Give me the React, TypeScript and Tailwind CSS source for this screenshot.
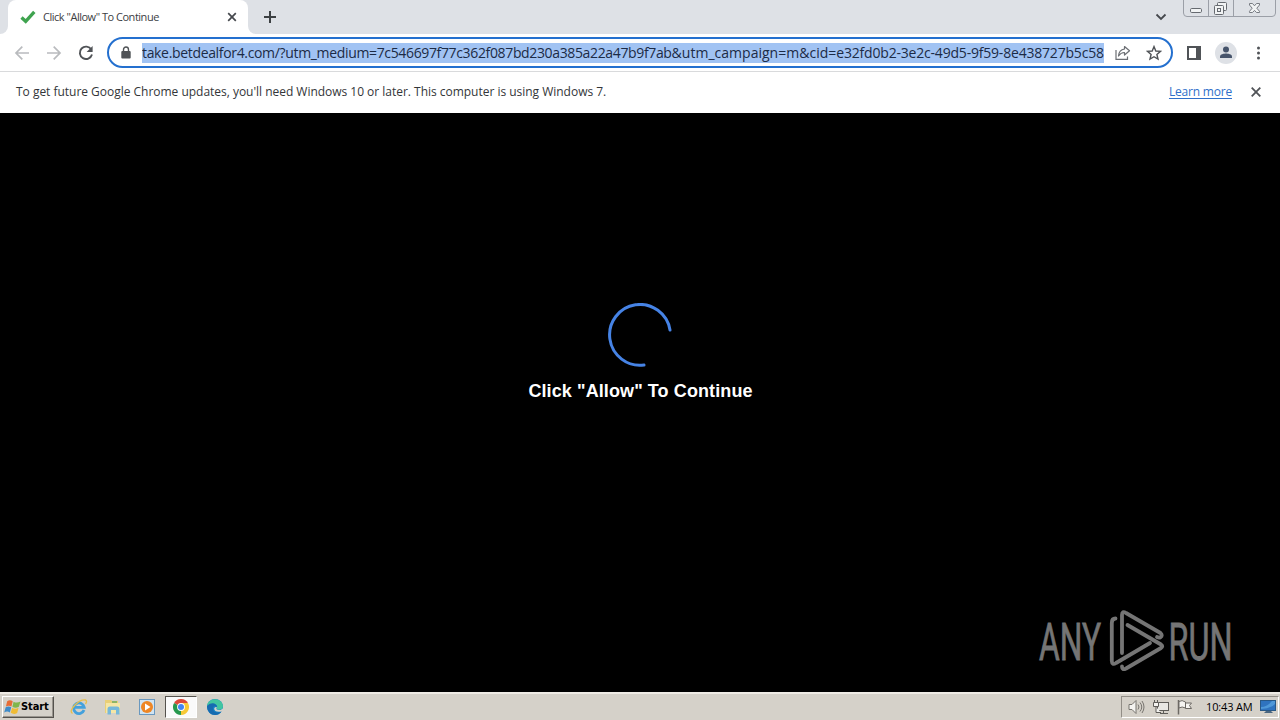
import type { ReactNode } from "react";

const uiFont = "font-['Open_Sans','Noto_Sans',sans-serif]";

function TabStrip() {
  return (
    <div className="flex h-[34px] items-start bg-[#dee1e6]">
      <div className="h-[34px] w-2 shrink-0 bg-white">
        <div className="h-full w-full rounded-br-lg bg-[#dee1e6]" />
      </div>
      <div className="flex h-[34px] w-[240px] shrink-0 items-center rounded-t-lg bg-white pl-3">
        <svg width="16" height="16" viewBox="0 0 16 16" fill="none">
          <path d="M1.5 8.5 5.7 12.3 14.3 2.8" stroke="#3fa34f" strokeWidth="3.3" />
        </svg>
        <span className="ml-[7px] w-[176px] whitespace-nowrap text-[11px] tracking-[-0.48px] text-[#3c4043]">
          Click "Allow" To Continue
        </span>
        <svg className="ml-[8px]" width="10" height="10" viewBox="0 0 10 10">
          <path d="M1.2 1.2 8.8 8.8M8.8 1.2 1.2 8.8" stroke="#45484d" strokeWidth="1.7" />
        </svg>
      </div>
      <div className="h-[34px] w-2 shrink-0 bg-white">
        <div className="h-full w-full rounded-bl-lg bg-[#dee1e6]" />
      </div>
      <svg className="ml-[8px] mt-[11px]" width="12" height="12" viewBox="0 0 12 12">
        <path d="M6 0V12M0 6H12" stroke="#3c4043" strokeWidth="2" />
      </svg>
      <svg className="ml-auto mt-[13px]" width="12" height="8" viewBox="0 0 12 8" fill="none">
        <path d="M1.5 1.5 6 6 10.5 1.5" stroke="#45484d" strokeWidth="1.8" />
      </svg>
      <WindowButtons />
    </div>
  );
}

function WindowButtons() {
  return (
    <svg className="ml-4 mr-1" width="93" height="18" viewBox="0 0 93 18" fill="none">
      <path
        d="M.5 0V13Q.5 16.5 4 16.5H89Q92.5 16.5 92.5 13V0M25.5 0V16.5M50.5 0V16.5"
        stroke="#9b9fa7"
      />
      <rect x="7.5" y="8.5" width="11" height="4" rx="1.2" fill="#f1f3f4" stroke="#666a70" />
      <rect x="34.5" y="2.5" width="9" height="8" rx="1" fill="#f1f3f4" stroke="#666a70" />
      <rect x="31.5" y="5.5" width="9" height="9" rx="1" fill="#f1f3f4" stroke="#666a70" />
      <rect x="34.5" y="8.5" width="3" height="3" stroke="#666a70" />
      <path
        d="M66.5 3.5H69.5L71.5 5.8 73.5 3.5H76.5V5L73.8 8.2 76.5 11.3V12.5H73.5L71.5 10.4 69.5 12.5H66.5V11.3L69.2 8.2 66.5 5Z"
        fill="#f1f3f4"
        stroke="#777b82"
      />
    </svg>
  );
}

function Toolbar() {
  return (
    <div className="flex h-[38px] items-center border-b border-[#d9dadc] bg-white">
      <svg className="ml-[14px]" width="16" height="16" viewBox="0 0 16 16" fill="none">
        <path d="M15 8H2M8.3 1.7 2 8 8.3 14.3" stroke="#b9bbbe" strokeWidth="1.7" />
      </svg>
      <svg className="ml-[16px]" width="16" height="16" viewBox="0 0 16 16" fill="none">
        <path d="M1 8H14M7.7 1.7 14 8 7.7 14.3" stroke="#b9bbbe" strokeWidth="1.7" />
      </svg>
      <svg className="ml-[16px]" width="16" height="16" viewBox="0 0 16 16" fill="none">
        <path d="M13.3 4.5A6.2 6.2 0 1 0 14 9.5" stroke="#505357" strokeWidth="1.9" />
        <path d="M14.6 1V7H8.6Z" fill="#505357" />
      </svg>
      <div className="ml-[13px] flex h-[31px] w-[1066px] items-center rounded-full border-2 border-[#2470cf] bg-white">
        <svg className="ml-[12px] shrink-0" width="10" height="14" viewBox="0 0 10 14" fill="none">
          <path d="M2.5 6V3.7A2.5 2.7 0 0 1 7.5 3.7V6" stroke="#505357" strokeWidth="1.4" />
          <rect x="0.3" y="5" width="9.4" height="7.5" rx="1" fill="#505357" />
        </svg>
        <div className="ml-[11px] h-[20px] w-[962px] shrink-0 overflow-hidden whitespace-nowrap bg-[#a1c3f3] text-[14px] leading-[20px] text-[#1c2b46]">
          <span className="tracking-[-0.335px]">take.betdealfor4.com/?utm_medium=</span>
          <span className="tracking-[-0.355px]">7c546697f77c362f087bd230a385a22a47b9f7ab</span>
          <span className="tracking-[0.02px]">&amp;utm_campaign=m&amp;cid=</span>
          <span className="tracking-[-0.2px]">e32fd0b2-3e2c-49d5-9f59-8e438727b5c58</span>
        </div>
        <svg className="ml-[11px] shrink-0" width="16" height="16" viewBox="0 0 16 16" fill="none">
          <path d="M1 5V14.3H12.5V11.5" stroke="#6b6e73" strokeWidth="1.2" />
          <path
            d="M9.5 1.5 14.5 5.8 9.5 10V7.5Q6 7.4 3.5 11Q4 4.7 9.5 4Z"
            stroke="#6b6e73"
            strokeWidth="1.2"
            strokeLinejoin="round"
          />
        </svg>
        <svg className="ml-[15px] shrink-0" width="16" height="16" viewBox="0 0 16 16" fill="none">
          <path
            d="M8 1.6 9.8 6 14.5 6.4 10.9 9.5 12 14.1 8 11.7 4 14.1 5.1 9.5 1.5 6.4 6.2 6Z"
            stroke="#505357"
            strokeWidth="1.4"
          />
        </svg>
      </div>
      <svg className="ml-[14px]" width="14" height="14" viewBox="0 0 14 14">
        <rect x="1" y="1" width="12" height="12" fill="none" stroke="#505357" strokeWidth="2" />
        <path d="M9 1H13V13H9Z" fill="#505357" />
      </svg>
      <svg className="ml-[14px]" width="22" height="22" viewBox="0 0 22 22">
        <circle cx="11" cy="11" r="11" fill="#dee1e6" />
        <circle cx="11" cy="7.5" r="3" fill="#46546b" />
        <path d="M5 16V14.5C5 12.3 9 11.6 11 11.6S17 12.3 17 14.5V16Z" fill="#46546b" />
      </svg>
      <svg className="ml-[19px]" width="4" height="14" viewBox="0 0 4 14" fill="#505357">
        <circle cx="2.5" cy="2" r="1.5" />
        <circle cx="2.5" cy="7" r="1.5" />
        <circle cx="2.5" cy="12" r="1.5" />
      </svg>
    </div>
  );
}

function InfoBar() {
  return (
    <div className="flex h-[41px] items-center bg-white pl-4 pr-[19px] text-[12px] text-[#333639]">
      <span className="whitespace-nowrap pb-[2px] tracking-[-0.02px]">
        To get future Google Chrome updates, you'll need Windows 10 or later. This computer is using Windows 7.
      </span>
      <a className="ml-auto whitespace-nowrap pb-[2px] tracking-[-0.2px] text-[#2f6fca] underline underline-offset-2">
        Learn more
      </a>
      <svg className="ml-[19px] mb-px" width="10" height="10" viewBox="0 0 10 10">
        <path d="M.7.7 9.3 9.3M9.3.7.7 9.3" stroke="#505357" strokeWidth="1.8" />
      </svg>
    </div>
  );
}

function Watermark() {
  return (
    <svg
      className="absolute right-[40px] bottom-[16px] overflow-visible"
      width="204"
      height="70"
      viewBox="0 0 204 70"
      fill="none"
    >
      <g
        fill="#757575"
        stroke="#757575"
        strokeWidth="0.8"
        fontFamily="Roboto, sans-serif"
        fontSize="52"
      >
        <text x="3" y="53.5" textLength="62" lengthAdjust="spacingAndGlyphs">ANY</text>
        <text x="132.5" y="53.5" textLength="64" lengthAdjust="spacingAndGlyphs">RUN</text>
      </g>
      <g stroke="#757575" strokeWidth="3.8" strokeLinecap="round" strokeLinejoin="round">
        <path d="M86 47V9Q86 4.5 90 7L124.5 27Q127 29.5 124.5 31.2Q123 32 121 31" />
        <path d="M79.5 12.5Q75.8 12.5 75.8 17V55Q76 59.5 80 57L114 37" />
        <path d="M91.5 19 125 38.5Q127.5 40.2 125 42L90 62.5Q86 64.5 86 60.5" />
      </g>
    </svg>
  );
}

function PageContent() {
  return (
    <main className="relative flex h-[579px] flex-col items-center bg-black pt-[190px]">
      <svg width="64" height="64" viewBox="0 0 64 64" fill="none">
        <path d="M62 27A30.4 30.4 0 1 0 36 62" stroke="#4683e5" strokeWidth="3" strokeLinecap="round" />
      </svg>
      <h1 className="mt-[12px] whitespace-nowrap pl-px font-['Liberation_Sans',sans-serif] text-[18px] font-bold leading-[24px] tracking-[0.1px] text-white">
        Click "Allow" To Continue
      </h1>
      <Watermark />
    </main>
  );
}

function TaskIcon({ children }: { children: ReactNode }) {
  return (
    <svg className="shrink-0" width="18" height="18" viewBox="0 0 18 18" fill="none">
      {children}
    </svg>
  );
}

function Taskbar() {
  return (
    <footer className="flex h-[28px] items-center border-t-2 border-[#eeebe5] bg-[#d5d1c9]">
      <button className="ml-[2px] flex h-[22px] w-[52px] shrink-0 items-center border border-b-[#55524d] border-l-white border-r-[#55524d] border-t-white pl-px shadow-[inset_-1px_-1px_0_#99958e]">
        <svg className="shrink-0" width="17" height="17" viewBox="0 0 16 16">
          <path d="M3 2Q5.5 .3 8.2 2L7 7Q4.5 5.7 1.8 7Z" fill="#e76d36" />
          <path d="M9 2.5Q12 4.3 15.5 2.3L14 7.2Q11 9 7.9 7.3Z" fill="#80b64b" />
          <path d="M1.6 7.8Q4.2 6.5 6.8 7.8L5.5 12.7Q3 11 .2 12.7Z" fill="#3e8bc9" />
          <path d="M7.7 8.2Q10.5 10 13.7 8.2L12.4 13.2Q9.3 15 6.3 13Z" fill="#f0bc35" />
        </svg>
        <span className="pt-px font-['DejaVu_Sans_Condensed','DejaVu_Sans',sans-serif] text-[11px] font-bold tracking-[-0.1px] text-black">
          Start
        </span>
      </button>
      <div className="ml-[16px] flex items-center">
        <TaskIcon>
          <path d="M14 12A5.3 5.3 0 1 1 14.2 9.3H5" stroke="#44a1dc" strokeWidth="2.8" />
          <path d="M2.5 15.5Q-1 13 5 7T15.5 2Q17.5 3 15.5 6" stroke="#e7bf4c" strokeWidth="1.4" />
        </TaskIcon>
        <div className="w-[16px]" />
        <TaskIcon>
          <path d="M1 2H7L8 3H14V15H1Z" fill="#e9cf77" />
          <path d="M2 5H16V15H2Z" fill="#f5e6a5" />
          <path d="M3.5 16.5V11Q3.5 8.5 6 8.5H13Q15.5 8.5 15.5 11V16.5H12V12H7V16.5Z" fill="#77b8d9" />
          <path d="M8 4H13" stroke="#6eac62" strokeWidth="1.5" />
        </TaskIcon>
        <div className="w-[16px]" />
        <TaskIcon>
          <rect x="1.5" y="1.5" width="15" height="15" fill="#d0e4f2" stroke="#6998bf" />
          <circle cx="9" cy="9" r="6" fill="#ee8624" />
          <path d="M7 5.5 12.5 9 7 12.5Z" fill="white" />
        </TaskIcon>
      </div>
      <div className="ml-[9px] flex h-[22px] w-[32px] items-center justify-center border border-b-white border-l-[#55524d] border-r-white border-t-[#55524d] bg-[#fafafa]">
        <svg width="16" height="16" viewBox="0 0 16 16">
          <path d="M8 8 1.07 4A8 8 0 0 1 14.93 4Z" fill="#dc4939" />
          <path d="M8 8V16A8 8 0 0 1 1.07 4Z" fill="#27984e" />
          <path d="M8 8 14.93 4A8 8 0 0 1 8 16Z" fill="#f7c936" />
          <path d="M8 4H14.93L11.5 10Z" fill="#f7c936" />
          <circle cx="8" cy="8" r="3.9" fill="white" />
          <circle cx="8" cy="8" r="3" fill="#4285f4" />
        </svg>
      </div>
      <svg className="ml-[10px]" width="16" height="16" viewBox="0 0 16 16">
        <circle cx="8" cy="8" r="8" fill="#1684c7" />
        <path d="M0 7C1-2 15-2 16 7C16 12 10 11 9.5 9.5C12 6 7 2 0 7Z" fill="#42c5a0" />
        <path d="M0 7C5 2 10 5 10 8Q6 6 6 9.5C6 14 11 14 14.5 12.5C10 19 0 16 0 7Z" fill="#176bb0" />
        <path
          d="M9.8 8C8.5 10 10 11.5 13.5 11L16 9.5V12.5L14.5 12.5C10 13.5 7 12 7.2 9.5Q7.5 7.5 9.8 8Z"
          fill="#d5d1c9"
        />
      </svg>
      <div className="ml-auto mr-px flex h-[22px] w-[158px] items-center border border-b-white border-l-[#928e87] border-r-white border-t-[#928e87]">
        <svg className="ml-[6px]" width="17" height="16" viewBox="0 0 17 16" fill="none" stroke="#77746f">
          <path d="M1 5.5H4L8 1.5V14.5L4 10.5H1Z" fill="#f5f4f1" />
          <path d="M10 5.5Q12 8 10 10.5M12 3.5Q15.5 8 12 12.5M14 2Q18 8 14 14" />
        </svg>
        <svg className="ml-[8px]" width="17" height="16" viewBox="0 0 17 16" fill="none" stroke="#5f5d59">
          <rect x="4.5" y="3.5" width="11" height="8" fill="#e8e7e3" />
          <path d="M10.5 12V14.5M7 14.5H15" />
          <path d="M.5 3.5H5.5V7.5H.5ZM1.5 1V3M4.5 1V3M3 8V13.5H8" fill="#f4f3f0" />
        </svg>
        <svg className="ml-[7px]" width="16" height="16" viewBox="0 0 16 16" stroke="#6c6964">
          <path d="M1.5 1V15.5" strokeWidth="1.5" />
          <path d="M2 2.5Q5 .5 8.5 3V9Q5 7 2 9ZM8.5 4H14.5L12.5 6.5 14.5 9.5H8.5Z" fill="#f5f4f1" />
        </svg>
        <span className="ml-[13px] whitespace-nowrap text-[11px] tracking-[-0.15px] text-black">10:43 AM</span>
        <svg className="ml-auto mr-[2px]" width="16" height="14" viewBox="0 0 16 14">
          <rect x=".5" y=".5" width="15" height="10" fill="#2f73bf" stroke="#295886" />
          <path d="M1 7Q7 7 12 1H15V4Q10 9 1 9Z" fill="#4f98d8" />
          <path d="M6 11H11L13 13H4Z" fill="#4a6680" />
        </svg>
      </div>
    </footer>
  );
}

export default function App() {
  return (
    <div className={`flex h-[720px] w-[1280px] flex-col overflow-hidden ${uiFont}`}>
      <TabStrip />
      <Toolbar />
      <InfoBar />
      <PageContent />
      <Taskbar />
    </div>
  );
}
